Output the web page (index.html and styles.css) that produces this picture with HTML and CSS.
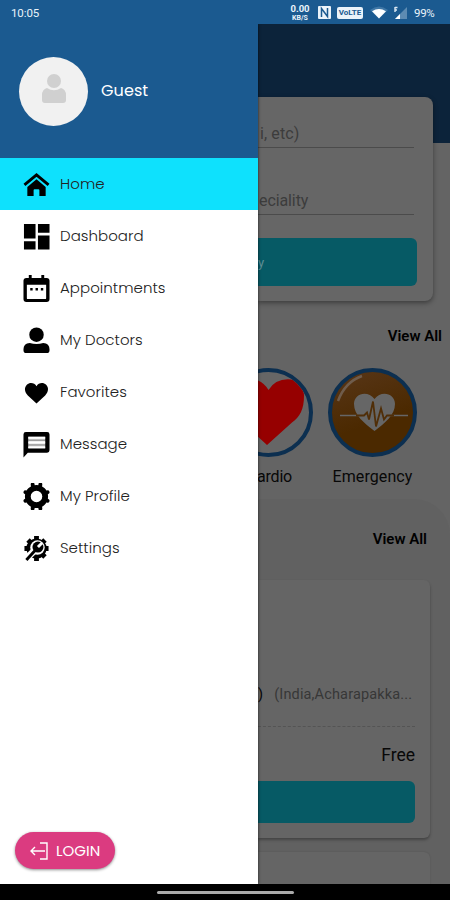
FILE: index.html
```html
<!DOCTYPE html>
<html lang="en">
<head>
    <meta charset="UTF-8">
    <meta name="viewport" content="width=device-width, initial-scale=1.0">
    <title>Home</title>
    <link rel="stylesheet" href="styles.css">
</head>
<body>
    <header class="statusbar">
        <span class="clock">10:05</span>
        <span class="speed"><b>0.00</b><small>KB/S</small></span>
        <svg class="nfc" width="13" height="13" viewBox="0 0 13 13"><rect width="13" height="13" rx="1" fill="#eaf3fa"/><path d="M3.500 11V2.500l6 8V2" fill="none" stroke="#1b5a90" stroke-width="1.500"/></svg>
        <span class="volte">VoLTE</span>
        <svg class="wifi" width="18" height="13" viewBox="0 0 18 13"><path d="M9 12.500L0 4Q9-3 18 4z" fill="#3f77a6"/><path d="M9 12.500L2 5.300Q9 .8 16 5.300z" fill="#fff"/></svg>
        <svg class="signal" width="15" height="14" viewBox="0 0 15 14"><path d="M14 1v12H2z" fill="#5d8bb2"/><path d="M7 8v5H2z" fill="#fff"/><path d="M2 1v5M2 1.500h2.500M2 4h2" stroke="#dce9f4" stroke-width="1.400"/></svg>
        <span class="battery">99%</span>
    </header>
    <div class="screen">
        <nav class="drawer">
            <div class="profile">
                <div class="avatar">
                    <svg width="24" height="29" viewBox="0 0 24 29"><circle cx="12" cy="7" r="7" fill="#d0d0d0"/><path d="M5 14q7 4.500 14 0 5 1.500 5 7v5q0 3-3 3H3q-3 0-3-3v-5q0-5.500 5-7z" fill="#d0d0d0"/></svg>
                </div>
                <span class="name">Guest</span>
            </div>
            <ul class="menu">
                <li class="active">
                    <svg width="28" height="28" viewBox="0 0 28 28"><path d="M1.500 14.500L14 4l12.500 10.500" fill="none" stroke="#000" stroke-width="3"/><path d="M14 8.500l9.500 8V26H17v-6q0-1-1-1h-4q-1 0-1 1v6H4.500v-9.500z"/></svg>
                    <span>Home</span>
                </li>
                <li>
                    <svg width="28" height="28" viewBox="0 0 28 28"><path d="M1 1h12v15H1zM15.500 1H27.500v9H15.500zM1 19h12v8.500H1zM15.500 13H27.500v14.500H15.500z"/></svg>
                    <span>Dashboard</span>
                </li>
                <li>
                    <svg width="28" height="28" viewBox="0 0 28 28"><path d="M6 0h3v3h10V0h3v3h2.500q3 0 3 3v19q0 3-3 3h-21q-3 0-3-3V6q0-3 3-3H6zM4 10v14q0 1 1 1h18q1 0 1-1V10z" fill-rule="evenodd"/><path d="M7.500 13.500h2.500v2.500H7.500zM13 13.500h2.500v2.500H13zM18.500 13.500h2.500v2.500h-2.500z"/></svg>
                    <span>Appointments</span>
                </li>
                <li>
                    <svg width="28" height="28" viewBox="0 0 28 28"><circle cx="14" cy="8" r="7.500"/><path d="M.5 24v-1q0-6 6.500-6.500 7 2 14 0 6.500.5 6.500 6.500v1q0 3-3 3h-21q-3 0-3-3z"/></svg>
                    <span>My Doctors</span>
                </li>
                <li>
                    <svg width="28" height="28" viewBox="0 0 28 28"><path d="M14 25.500L5 17C1.500 13.500 1 9 4 6 7.200 3 12 4 14 7.500 16 4 20.800 3 24 6c3 3 2.500 7.500-1 11z"/></svg>
                    <span>Favorites</span>
                </li>
                <li>
                    <svg width="28" height="28" viewBox="0 0 28 28"><path d="M3 1h22q2.500 0 2.500 2.500v16.500q0 2.500-2.500 2.500H5L.5 27.500V3.500Q.5 1 3 1z"/><path d="M5.500 6H23v12H5.500z" fill="#ddd"/><path d="M5.500 7H23M5.500 12H23M5.500 17H23" stroke="#fff" stroke-width="2"/><path d="M5.500 9.500H23M5.500 14.500H23" stroke="#777"/></svg>
                    <span>Message</span>
                </li>
                <li>
                    <svg width="28" height="28" viewBox="0 0 28 28"><circle cx="14" cy="14" r="9" fill="none" stroke="#000" stroke-width="6"/><path d="M10 1.500l.5 4M18 1.500l-.5 4M10 26.500l.5-4M18 26.500l-.5-4M2.500 9.500l3.500 1.500M25.500 9.500l-3.500 1.500M2.500 18.500l3.500-1.500M25.500 18.500l-3.500-1.500" stroke="#000" stroke-width="4" stroke-linecap="round"/></svg>
                    <span>My Profile</span>
                </li>
                <li>
                    <svg width="28" height="28" viewBox="0 0 28 28"><circle cx="14" cy="14" r="10.500"/><path d="M14 1v26M1.500 14h25M5.200 5.200l17.600 17.600M22.800 5.200L5.200 22.800" stroke="#000" stroke-width="5"/><path d="M1 27l10-10" stroke="#fff" stroke-width="7"/><circle cx="15" cy="13" r="7.500" fill="#fff"/><circle cx="15.500" cy="12.500" r="5.700"/><path d="M15.500 12.500L20 8" stroke="#fff" stroke-width="3"/><path d="M3.500 26L13 15.500" stroke="#000" stroke-width="3"/></svg>
                    <span>Settings</span>
                </li>
            </ul>
            <button class="login">
                <svg width="18" height="18" viewBox="0 0 18 18"><path d="M10 1h7v16h-7M15 9H1M5 5L1 9l4 4" fill="none" stroke="#fff" stroke-width="1.400"/></svg>
                <span>LOGIN</span>
            </button>
        </nav>
        <main class="page">
            <div class="banner"></div>
            <section class="search">
                <div class="field city">i, etc)</div>
                <div class="field speciality">eciality</div>
                <div class="button">y</div>
            </section>
            <a class="viewall">View All</a>
            <section class="categories">
                <figure class="cardio">
                    <div class="disc">
                        <svg width="81" height="81" viewBox="0 0 81 81"><path d="M39 73L6 43C-5 29 3 8 19 7q14-1 21.500 11Q48 6 63 7.500c9 1 13 8 13 16 0 14-4 21-12 27z" fill="#960000"/></svg>
                    </div>
                    <figcaption>ardio</figcaption>
                </figure>
                <figure class="emergency">
                    <div class="disc orange">
                        <svg width="81" height="81" viewBox="0 0 81 81"><path d="M6 29Q13 10 30 4" fill="none" stroke="#6f5c4c" stroke-width="2.500"/><path d="M42.500 59C32 51 22 43 22 32c0-11 14-14 20.500-5 6.500-9 20.500-6 20.500 5 0 11-10 19-20.500 27z" fill="#666"/><path d="M8 43.500h68" stroke="#666" stroke-width="1.500"/><path d="M24 43.500h8l3-3 2 7 4-18 3 25 5-18 3 11 3-4h7" fill="none" stroke="#502e08" stroke-width="1.800"/></svg>
                    </div>
                    <figcaption>Emergency</figcaption>
                </figure>
            </section>
            <section class="doctors">
                <a class="viewall">View All</a>
                <article class="doctor">
                    <div class="place"><b>)</b><span>(India,Acharapakka...</span></div>
                    <div class="fee">Free</div>
                    <div class="button"></div>
                </article>
                <article class="doctor next"></article>
            </section>
        </main>
    </div>
    <footer class="navbar"><span class="handle"></span></footer>
</body>
</html>
```
FILE: styles.css
```css
* {
    box-sizing: border-box;
}

body {
    margin: 0;
    height: 900px;
    display: flex;
    flex-direction: column;
    overflow: hidden;
    font-family: Roboto, "Liberation Sans", sans-serif;
}

.statusbar {
    height: 24px;
    flex: none;
    display: flex;
    align-items: center;
    padding: 1px 14px 0 11px;
    background: #1b5a90;
    color: #eaf3fa;
    font-size: 11.5px;
}

.clock {
    margin-right: auto;
    letter-spacing: -0.1px;
}

.speed {
    display: flex;
    flex-direction: column;
    align-items: center;
    width: 20px;
    font-size: 9.5px;
    line-height: 10px;
}

.speed small {
    font-size: 7px;
    font-weight: bold;
    line-height: 8px;
}

.nfc {
    margin-left: 8px;
}

.volte {
    width: 26px;
    height: 12px;
    margin-left: 6px;
    border-radius: 2px;
    background: #eaf3fa;
    color: #1b5a90;
    font-size: 8px;
    font-weight: bold;
    line-height: 12px;
    text-align: center;
}

.wifi {
    margin-left: 7px;
}

.signal {
    margin: 0 6px 0 5px;
}

.battery {
    width: 22px;
    letter-spacing: -0.3px;
}

.screen {
    height: 860px;
    flex: none;
    display: flex;
    overflow: hidden;
}

/* drawer */
.drawer {
    width: 258px;
    flex: none;
    display: flex;
    flex-direction: column;
    align-items: flex-start;
    background: #fff;
    box-shadow: 0 0 3px rgba(0, 0, 0, 0.7);
    z-index: 1;
    font-family: Poppins, Inter, sans-serif;
}

.profile {
    width: 100%;
    height: 134px;
    display: flex;
    align-items: center;
    gap: 13px;
    padding-left: 19px;
    background: #1b5a90;
}

.avatar {
    width: 69px;
    height: 69px;
    border-radius: 50%;
    background: #f1f1f1;
    display: flex;
    justify-content: center;
    padding-top: 17px;
}

.name {
    padding-bottom: 2px;
    color: #fff;
    font-size: 16px;
    letter-spacing: 0.1px;
}

.menu {
    width: 100%;
    margin: 0;
    padding: 0;
    list-style: none;
}

.menu li {
    height: 52px;
    display: flex;
    align-items: center;
    gap: 10px;
    padding-left: 23px;
    color: #222;
    font-size: 15px;
    font-weight: 300;
    letter-spacing: 0.04px;
}

.menu span {
    padding-bottom: 2px;
}

.menu svg {
    width: 27px;
    height: 27px;
    flex: none;
}

.menu .active {
    background: #0ee1fd;
}

.login {
    width: 100px;
    height: 37px;
    margin: auto 0 15px 15px;
    padding: 0 0 0 15px;
    border: 0;
    border-radius: 19px;
    background: #db3b80;
    box-shadow: 0 1px 3px rgba(0, 0, 0, 0.45);
    display: flex;
    align-items: center;
    gap: 8px;
    color: #fff;
    font-family: inherit;
    font-size: 15px;
    letter-spacing: 0;
}

/* page behind the drawer, already dimmed */
.page {
    flex: 1;
    min-width: 0;
    overflow: hidden;
    background: #646464;
    color: #080808;
}

.banner {
    height: 119px;
    background: #0c233a;
}

.search {
    height: 204px;
    margin: -46px 17px 0 0;
    padding: 20px 16px 0 0;
    border-radius: 0 8px 8px 0;
    background: #666;
    box-shadow: 0 2px 5px rgba(0, 0, 0, 0.4);
    position: relative;
}

.field {
    height: 31px;
    border-bottom: 1px solid #4b4b4b;
    color: #3c3c3c;
    font-size: 16px;
    line-height: 34px;
    margin-right: 3px;
}

.city {
    padding-left: 2px;
    letter-spacing: 0.1px;
}

.speciality {
    margin-top: 36px;
    padding-left: 1px;
    letter-spacing: -0.1px;
}

.button {
    border-radius: 0 6px 6px 0;
    background: #065a65;
}

.search .button {
    height: 48px;
    margin-top: 23px;
    color: #5f9097;
    font-size: 13px;
    line-height: 50px;
}

.viewall {
    display: block;
    text-align: right;
    color: #000;
    font-size: 15px;
    font-weight: 600;
    line-height: 20px;
}

.page > .viewall {
    margin: 25px 8px 0 0;
}

.categories {
    display: flex;
    gap: 15px;
    margin: 22px 0 0 -34px;
}

figure {
    width: 89px;
    flex: none;
    margin: 0;
}

.disc {
    height: 89px;
    border: 4px solid #0c2f50;
    border-radius: 50%;
    overflow: hidden;
    background: #666;
}

.orange {
    background: linear-gradient(160deg, #583618, #4b2900 60%);
}

.disc svg {
    display: block;
}

figcaption {
    margin-top: 10px;
    font-size: 16px;
    line-height: 20px;
    letter-spacing: 0.1px;
    text-align: center;
}

.cardio figcaption {
    padding-left: 33px;
    letter-spacing: -0.2px;
    text-align: left;
}

.doctors {
    height: 390px;
    margin-top: 12px;
    padding: 30px 20px 0 0;
    border-top-right-radius: 36px;
    background: #616161;
}

.doctors .viewall {
    margin-right: 3px;
}

.doctor {
    height: 258px;
    margin-top: 31px;
    padding: 104px 15px 0 0;
    border-radius: 0 6px 6px 0;
    background: #656565;
    box-shadow: 0 2px 3px rgba(0, 0, 0, 0.3);
}

.place {
    height: 43px;
    display: flex;
    gap: 11px;
    border-bottom: 1px dashed #545454;
    font-size: 14.5px;
    line-height: 22px;
    letter-spacing: 0.15px;
    white-space: nowrap;
}

.place b {
    font-weight: 400;
}

.place span {
    color: #373737;
}

.fee {
    padding-top: 15px;
    font-size: 17.5px;
    line-height: 26px;
    text-align: right;
}

.doctor .button {
    height: 42px;
    margin-top: 13px;
}

.doctor.next {
    height: 60px;
    margin-top: 14px;
    box-shadow: 0 0 2px rgba(0, 0, 0, 0.15);
}

.navbar {
    height: 16px;
    flex: none;
    display: flex;
    justify-content: center;
    align-items: center;
    background: #000;
}

.handle {
    width: 137px;
    height: 3px;
    border-radius: 2px;
    background: #aaa;
}
```
